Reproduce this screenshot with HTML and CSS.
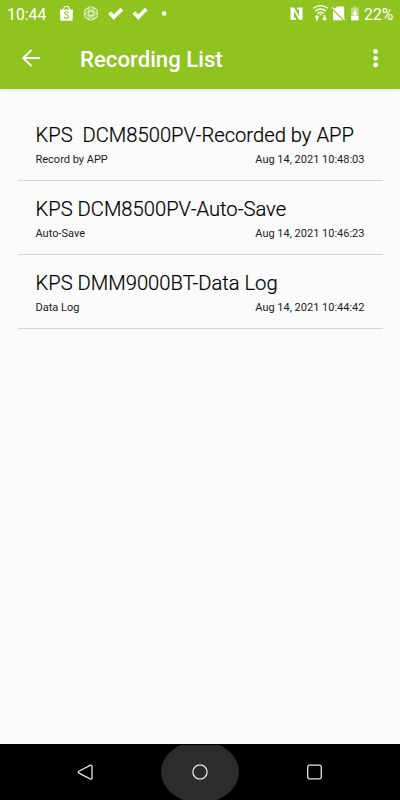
FILE: index.html
```html
<!DOCTYPE html>
<html lang="en">

<head>
  <meta charset="UTF-8">
  <meta name="viewport" content="width=device-width, initial-scale=1.0">
  <title>Recording List</title>
  <link rel="stylesheet" href="styles.css">
</head>

<body>
  <div class="screen">
    <header class="header">
      <div class="status-bar">
        <span class="clock">10:44</span>
        <svg class="status-left" width="130" height="28" viewBox="50 0 130 28">
          <!-- shopping bag -->
          <path d="M60 9.500h13l-.5 11.300h-12z" fill="#fff" />
          <path d="M63.500 10c0-5 6-5 6 0" fill="none" stroke="#fff" stroke-width="1.100" />
          <path d="M68.500 12.600c-1.500-1.200-4-.7-3.900.8.200 1.700 4 1.200 4 3.200 0 1.700-2.600 2.100-4.400.7" fill="none" stroke="#8fc31f" stroke-width="1.100" />
          <!-- flower -->
          <g fill="none" stroke="#e4f2c6" stroke-width="1.100">
            <path d="M89 7.300q2-1 4 0l3 1.900q1.300 1 1.300 2.500v4q0 1-1.300 2l-3 1.800q-2 1-4 0l-3-1.800q-1.300-1-1.300-2v-4q0-1.500 1.300-2.500z" />
            <circle cx="91" cy="13.300" r="2.300" />
            <path d="M88 8l5.500 3.200L97 13.500M94 8l-5.500 3.200L85 13.500M88 19l.2-5.500V8M94 19v-5.500V8M85 13.500l3.500 2L94 19M97 13.500l-3.500 2L88 19" stroke-width=".8" />
          </g>
          <!-- double checks -->
          <g fill="none" stroke="#fff" stroke-width="3.800">
            <path d="M109.400 12.700l4.300 4.300 8.200-8" />
            <path d="M133.900 12.700l4.300 4.300 8.200-8" />
          </g>
          <path d="M110 15l2.500-2.500M134.500 15l2.500-2.500" stroke="#c3df86" stroke-width=".8" />
          <circle cx="164.200" cy="13.500" r="2.300" fill="#fff" />
        </svg>
        <svg class="status-right" width="75" height="28" viewBox="287 0 75 28">
          <!-- nfc -->
          <path d="M290.500 7.500h3.500l5 9V9.500h-2v-2h5.500v12.300H299l-5-9v7h2v2h-5.500z" fill="#fff" />
          <!-- wifi with traffic arrows -->
          <g fill="none" stroke="#fff" stroke-width="1.400">
            <path d="M313.300 8.300q7.300-5.300 14.600 0" />
            <path d="M315.400 11.100q5.200-4.200 10.400 0" />
            <path d="M317.500 13.700q3.100-2.700 6.200 0" />
          </g>
          <path d="M319.400 14.300l1.200 1.400 1.200-1.400q-1.200-1-2.400 0zM317 14.800l2.600 2.800h-1.700v3h-1.800v-3h-1.700zM324.500 21l2.600-2.800h-1.700v-3h-1.800v3h-1.700z" fill="#fff" />
          <!-- no sim -->
          <path d="M337.500 6.500h6.700v12.200l-10.200-9.700zM333 10.500l9.800 9.700H333z" fill="#fff" />
          <path d="M332 7.200l13 13" stroke="#fff" stroke-width="1.200" />
          <!-- battery -->
          <path d="M353.500 6.500h3v1.300h2.200V16h-7.600V7.800h2.400z" fill="#bedc7d" />
          <path d="M351.100 16h7.600v4.300h-7.600z" fill="#fff" />
          <path d="M355.700 9l-3.500 5.200h2.200v4l3.500-5.500h-2.200z" fill="#fff" />
        </svg>
        <span class="battery-level">22%</span>
      </div>

      <div class="app-bar">
        <svg class="back-icon" width="18" height="18" viewBox="0 -1 18 18" fill="none" stroke="#fff" stroke-width="1.900">
          <path d="M18 7H1.500M9.500-1.200L1.300 7l8.200 8.200" />
        </svg>
        <h1 class="title">Recording List</h1>
        <svg class="menu-icon" width="6" height="20" viewBox="0 0 6 20" fill="#fff">
          <circle cx="2.600" cy="2.500" r="2.400" />
          <circle cx="2.600" cy="9.300" r="2.400" />
          <circle cx="2.600" cy="16" r="2.400" />
        </svg>
      </div>
    </header>

    <main class="recordings">
      <div class="recording">
        <h2 class="name">KPS&nbsp; DCM8500PV-Recorded by APP</h2>
        <div class="details">
          <span>Record by APP</span>
          <span>Aug 14, 2021 10:48:03</span>
        </div>
      </div>
      <div class="recording">
        <h2 class="name">KPS DCM8500PV-Auto-Save</h2>
        <div class="details">
          <span>Auto-Save</span>
          <span>Aug 14, 2021 10:46:23</span>
        </div>
      </div>
      <div class="recording">
        <h2 class="name">KPS DMM9000BT-Data Log</h2>
        <div class="details">
          <span>Data Log</span>
          <span>Aug 14, 2021 10:44:42</span>
        </div>
      </div>
    </main>

    <nav class="nav-bar">
      <svg width="400" height="56" viewBox="0 0 400 56" fill="none" stroke="#e4e4e4" stroke-width="1.300">
        <ellipse cx="200" cy="28" rx="39" ry="31" fill="#2c2c2c" stroke="none" />
        <path d="M0 0h400v1H0z" fill="#000" stroke="none" />
        <path d="M90 21.400Q92 20.500 92 22.500v11.300q0 2-2 1.100l-11-5.700q-1.500-1 0-2z" />
        <circle cx="200" cy="28" r="7.100" />
        <rect x="307.700" y="21.200" width="13.600" height="13.600" rx="2" />
      </svg>
    </nav>
  </div>
</body>

</html>
```

FILE: styles.css
```css
* {
  margin: 0;
  padding: 0;
  box-sizing: border-box;
  font-family: Roboto, sans-serif;
}

body {
  background-color: #fafafa;
  color: #000;
}

svg {
  display: block;
  flex-shrink: 0;
}

.screen {
  width: 400px;
  height: 800px;
  display: flex;
  flex-direction: column;
  overflow: hidden;
}

.header {
  height: 89px;
  background-color: #8fc31f;
  color: #fff;
  box-shadow: 0 1px 3px rgba(0, 0, 0, 0.12);
}

.status-bar {
  height: 28px;
  display: flex;
  align-items: center;
  padding-left: 7px;
}

.clock {
  width: 43px;
  padding-top: 1px;
  font-size: 15.8px;
  line-height: 28px;
}

.status-right {
  margin-left: auto;
}

.battery-level {
  width: 38px;
  padding: 1px 0 0 2px;
  font-size: 15.8px;
  line-height: 28px;
}

.app-bar {
  height: 61px;
  display: flex;
  align-items: center;
  padding: 0 21px 0 22px;
}

.back-icon {
  overflow: visible;
}

.title {
  margin-left: 40px;
  font-size: 22.2px;
  font-weight: 500;
  line-height: 30px;
}

.menu-icon {
  margin-left: auto;
}

.recordings {
  flex: 1;
  padding: 18px 17.5px 0 18px;
}

.recording {
  height: 74px;
  padding: 16px 18px 0 17.5px;
  border-bottom: 1px solid #d5d5d5;
}

.name {
  font-size: 20.2px;
  font-weight: 300;
  line-height: 24px;
  white-space: nowrap;
  -webkit-text-stroke: 0.2px #000;
}

.details {
  display: flex;
  justify-content: space-between;
  margin-top: 6px;
  font-size: 11px;
  font-weight: 400;
  line-height: 14px;
  color: #1c1c1c;
}

.nav-bar {
  height: 56px;
  background-color: #000;
}
```
